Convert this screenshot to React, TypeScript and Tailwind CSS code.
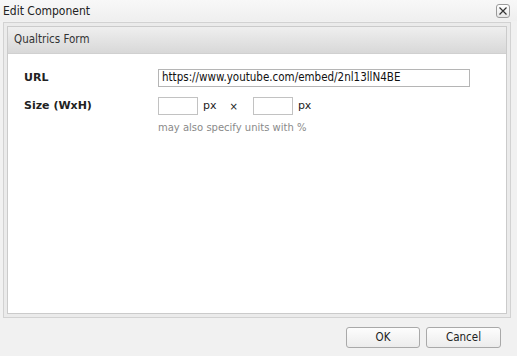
const cond = { fontFamily: '"DejaVu Sans Condensed", "DejaVu Sans", Tahoma, sans-serif' };

export default function App() {
  return (
    <div
      className="w-[517px] h-[356px] bg-[#f1f1f1] flex flex-col text-[#222] overflow-hidden"
      style={{ fontFamily: '"DejaVu Sans", Tahoma, sans-serif' }}
    >
      {/* Title bar */}
      <div className="h-[21px] flex items-center justify-between pl-[3px] pr-[7px] bg-gradient-to-b from-[#f8f8f8] to-[#efefef]">
        <span className="text-[12px] text-[#222]" style={cond}>Edit Component</span>
        <button className="w-[14px] h-[14px] rounded-[3px] border border-[#9a9a9a] bg-gradient-to-b from-white to-[#e6e6e6] flex items-center justify-center">
          <svg width="8" height="8" viewBox="0 0 8 8">
            <path d="M0.5 0.5 L7.5 7.5 M7.5 0.5 L0.5 7.5" stroke="#333" strokeWidth="1.2" />
          </svg>
        </button>
      </div>

      {/* Outer frame */}
      <div className="ml-[3px] mt-[1px] w-[508px] h-[296px] border border-[#d2d2d2] bg-[#ebebeb] p-[3px]">
        <div className="h-full border border-[#cbcbcb] bg-white flex flex-col">
          <div className="h-[27px] flex items-center px-[6px] bg-gradient-to-b from-[#efefef] to-[#d8d8d8] border-b border-[#d0d0d0]">
            <span className="text-[11.5px] text-[#333]" style={cond}>Qualtrics Form</span>
          </div>
          <div className="flex-1 pt-[15px] pl-[16px]">
            <div className="grid grid-cols-[134px_1fr] gap-y-[10px] items-center">
              <span className="text-[11px] font-bold">URL</span>
              <div
                className="w-[312px] h-[18px] border border-[#b5b5b5] flex items-center px-[3px] text-[11.5px] text-[#111]"
                style={cond}
              >
                https://www.youtube.com/embed/2nl13llN4BE
              </div>
              <span className="text-[11px] font-bold">Size (WxH)</span>
              <div className="flex items-center text-[11px]">
                <div className="w-[40px] h-[18px] border border-[#c2c2c2]" />
                <span className="ml-[5px]">px</span>
                <span className="ml-[13px] text-[10px]">×</span>
                <div className="ml-[15px] w-[40px] h-[18px] border border-[#c2c2c2]" />
                <span className="ml-[5px]">px</span>
              </div>
            </div>
            <div className="ml-[134px] mt-[5px] text-[10px] text-[#8a8a8a]">may also specify units with %</div>
          </div>
        </div>
      </div>

      {/* Footer */}
      <div className="flex justify-end gap-[6px] pr-[16px] mt-[9px]">
        <button
          className="w-[74px] h-[21px] rounded-[3px] border border-[#a9a9a9] bg-gradient-to-b from-[#fdfdfd] to-[#ececec] text-[11.5px] text-[#222]"
          style={cond}
        >
          OK
        </button>
        <button
          className="w-[75px] h-[21px] rounded-[3px] border border-[#a9a9a9] bg-gradient-to-b from-[#fdfdfd] to-[#ececec] text-[11.5px] text-[#222]"
          style={cond}
        >
          Cancel
        </button>
      </div>
    </div>
  );
}
